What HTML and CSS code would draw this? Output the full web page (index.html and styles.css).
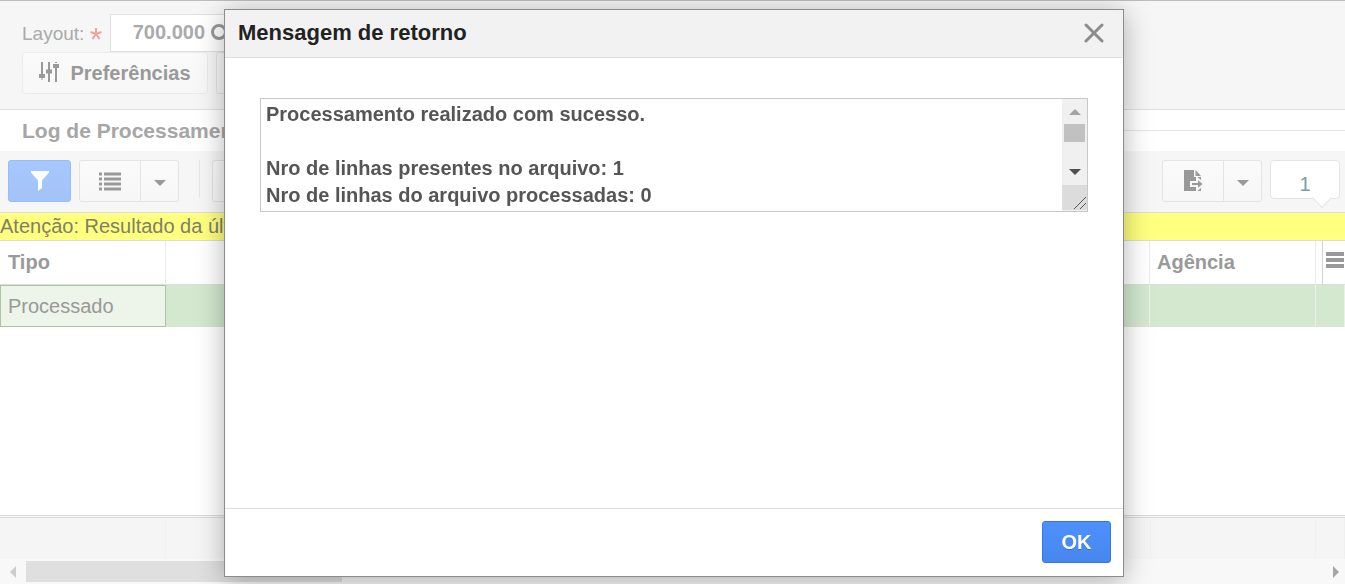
FILE: index.html
```html
<!DOCTYPE html>
<html lang="pt-BR">
<head>
    <meta charset="UTF-8">
    <meta name="viewport" content="width=device-width, initial-scale=1.0">
    <title>Log de Processamento</title>
    <link rel="stylesheet" href="styles.css">
</head>
<body>
    <div class="pagina">
        <header class="painel">
            <div class="campo">
                <label for="layout">Layout:
                    <svg class="obrigatorio" viewBox="0 0 12 12"><path d="M6 0v6M0.500 4l5.500 2 5.500-2M2.500 11l3.500-5 3.500 5"/></svg>
                </label>
                <div class="campo-busca">
                    <input type="text" id="layout" value="700.000">
                    <svg class="lupa" viewBox="0 0 20 20"><circle cx="8" cy="9" r="6.5"/><path d="M13 14l5 5"/></svg>
                </div>
            </div>
            <div class="acoes">
                <button class="btn btn-pref">
                    <svg class="icone-pref" viewBox="0 0 20 22">
                        <path d="M3 1v18M10 1v20M17 1v20" stroke-width="2"/>
                        <path d="M0 15h6M7 10.500h6M14 5h6" stroke-width="4"/>
                        <path class="vao" d="M0 18h6M14 2.500h6" stroke-width="1"/>
                    </svg>
                    Preferências
                </button>
                <button class="btn btn-extra" aria-label="Mais ações"></button>
            </div>
        </header>

        <div class="titulo">
            <h1>Log de Processamento</h1>
            <span class="linha"></span>
        </div>

        <div class="toolbar">
            <button class="btn btn-filtro" aria-label="Filtrar">
                <svg class="icone-filtro" viewBox="0 0 20 22"><path d="M1 1h18v1.500l-7 8v7.500l-4 3v-10.500l-7-8z"/></svg>
            </button>
            <div class="grupo">
                <button class="btn" aria-label="Lista">
                    <svg class="icone-lista" viewBox="0 0 22 20"><path d="M0 3h3M5 3h17M0 8h3M5 8h17M0 13h3M5 13h17M0 18h3M5 18h17"/></svg>
                </button>
                <button class="btn btn-seta" aria-label="Opções da lista"><span class="seta"></span></button>
            </div>
            <span class="separador"></span>
            <button class="btn btn-extra" aria-label="Outras opções"></button>
            <div class="grupo direita">
                <button class="btn" aria-label="Exportar">
                    <svg class="icone-exportar" viewBox="0 0 20 22">
                        <path class="folha" d="M0 0h10v7h7v14h-17z"/>
                        <path class="folha" d="M11.500 0l5.500 6h-5.500z"/>
                        <path class="flecha" d="M7 12h6v-4l7 6-7 6v-4h-6z"/>
                    </svg>
                </button>
                <button class="btn btn-seta" aria-label="Opções de exportação"><span class="seta"></span></button>
            </div>
            <div class="contador">1</div>
        </div>

        <div class="aviso">Atenção: Resultado da última importação</div>

        <div class="grade">
            <table>
                <colgroup><col class="col"><col><col class="col"><col class="col-menu"></colgroup>
                <thead>
                    <tr>
                        <th>Tipo</th>
                        <th></th>
                        <th>Agência</th>
                        <th class="celula-menu">
                            <button class="btn-menu" aria-label="Colunas"><span></span><span></span><span></span></button>
                        </th>
                    </tr>
                </thead>
                <tbody>
                    <tr>
                        <td class="selecionada">Processado</td>
                        <td></td>
                        <td></td>
                        <td></td>
                    </tr>
                </tbody>
            </table>
        </div>

        <div class="rodape"><span></span><span></span><span></span><span></span></div>
        <div class="rolagem-h">
            <span class="rolar-esq"></span>
            <span class="barra-h"></span>
            <span class="rolar-dir"></span>
        </div>
    </div>

    <div class="fundo">
        <div class="dialogo" role="dialog" aria-labelledby="dialogo-titulo">
            <div class="dialogo-topo">
                <h2 id="dialogo-titulo">Mensagem de retorno</h2>
                <button class="fechar" aria-label="Fechar">
                    <svg viewBox="0 0 20 20"><path d="M2 2l16 16M18 2l-16 16"/></svg>
                </button>
            </div>
            <div class="dialogo-corpo">
                <div class="caixa">
                    <textarea aria-label="Mensagem" readonly>Processamento realizado com sucesso.

Nro de linhas presentes no arquivo: 1
Nro de linhas do arquivo processadas: 0</textarea>
                    <div class="rolagem-v">
                        <span class="rolar-cima"></span>
                        <span class="barra-v"></span>
                        <span class="rolar-baixo"></span>
                        <svg class="canto" viewBox="0 0 25 25"><path d="M12 24l12-12M18 24l6-6"/></svg>
                    </div>
                </div>
            </div>
            <div class="dialogo-rodape">
                <button class="btn-ok">OK</button>
            </div>
        </div>
    </div>
</body>
</html>
```
FILE: styles.css
```css
* {
    box-sizing: border-box;
}

body {
    margin: 0;
    font-family: Arial, "Liberation Sans", sans-serif;
    font-size: 20px;
    color: #999;
    background-color: #fff;
    overflow: hidden;
}

h1, h2 {
    margin: 0;
    font-weight: bold;
}

button, input, textarea {
    font-family: inherit;
    font-size: inherit;
}

svg {
    display: block;
    fill: none;
    stroke: #999;
}

.pagina {
    display: flex;
    flex-direction: column;
    height: 100vh;
}

/* Painel superior */
.painel {
    height: 110px;
    padding: 13px 22px 0;
    background-color: #f6f6f6;
    border-top: 1px solid #bdbdbd;
    border-bottom: 1px solid #e0e0e0;
}

.campo {
    display: flex;
    align-items: center;
}

.campo label {
    display: flex;
    align-items: center;
    gap: 6px;
    width: 88px;
    padding-top: 2px;
    color: #aaa;
    font-size: 19px;
    white-space: nowrap;
}

.obrigatorio {
    width: 12px;
    height: 12px;
    stroke: #f0a09a;
    stroke-width: 2;
}

.campo-busca {
    display: flex;
    align-items: center;
    width: 140px;
    height: 38px;
    background-color: #fff;
    border: 1px solid #e0e0e0;
}

.campo-busca input {
    width: 100px;
    height: 34px;
    padding: 0 6px 2px 0;
    border: none;
    background: none;
    color: #aaa;
    font-weight: bold;
    text-align: right;
}

.lupa {
    width: 20px;
    height: 20px;
    stroke-width: 3;
}

.acoes {
    display: flex;
    gap: 8px;
}

.btn {
    display: flex;
    align-items: center;
    justify-content: center;
    height: 42px;
    padding: 0;
    background: linear-gradient(#fafafa, #f7f7f7);
    border: 1px solid #e4e4e4;
    border-radius: 3px;
    color: #999;
    font-weight: bold;
}

.btn-pref {
    gap: 11px;
    width: 186px;
    border-color: #ececec;
}

.icone-pref {
    width: 20px;
    height: 22px;
    margin-bottom: 3px;
}

.vao {
    stroke: #f8f8f8;
}

.btn-extra {
    width: 64px;
}

/* Título */
.titulo {
    display: flex;
    align-items: center;
    height: 41px;
    padding-left: 22px;
}

.titulo h1 {
    font-size: 21px;
    color: #a6a6a6;
}

.linha {
    flex: 1;
    height: 1px;
    background-color: #e6e6e6;
}

/* Barra de ferramentas */
.toolbar {
    display: flex;
    gap: 8px;
    height: 61px;
    padding: 9px 5px 0 8px;
    background-color: #f6f6f6;
}

.btn-filtro {
    width: 63px;
    background: linear-gradient(#a6c8ff, #a3c2f7);
    border-color: #98bcf5;
}

.icone-filtro {
    width: 20px;
    height: 22px;
    fill: #fff;
    stroke: none;
}

.grupo {
    display: flex;
}

.grupo .btn {
    width: 62px;
    border-radius: 3px 0 0 3px;
}

.grupo .btn-seta {
    width: 39px;
    margin-left: -1px;
    border-radius: 0 3px 3px 0;
}

.icone-lista {
    width: 22px;
    height: 20px;
    stroke-width: 3;
}

.seta {
    margin-top: 4px;
    border: 6px solid transparent;
    border-top-color: #999;
    border-bottom: none;
}

.separador {
    width: 1px;
    height: 38px;
    margin: 0 4px 0 12px;
    background-color: #e6e6e6;
}

.direita {
    margin-left: auto;
}

.icone-exportar {
    width: 20px;
    height: 22px;
    margin-left: 2px;
}

.folha {
    fill: #999;
    stroke: none;
}

.flecha {
    fill: #999;
    stroke: #f8f8f8;
    stroke-width: 2;
}

.contador {
    position: relative;
    width: 70px;
    height: 39px;
    background-color: #fff;
    border: 1px solid #e4e4e4;
    border-radius: 4px;
    line-height: 46px;
    text-align: center;
    color: #7d9ba8;
}

.contador::after {
    content: "";
    position: absolute;
    right: 10px;
    bottom: -7px;
    width: 13px;
    height: 13px;
    background-color: #fff;
    border: solid #e4e4e4;
    border-width: 0 1px 1px 0;
    transform: rotate(45deg);
}

.aviso {
    height: 29px;
    background-color: #ffff80;
    border-top: 1px solid #ddd;
    border-bottom: 1px solid #ddd;
    line-height: 27px;
    color: #808066;
}

/* Tabela */
.grade {
    flex: 1;
    min-height: 0;
}

.grade table {
    width: 100%;
    table-layout: fixed;
    border-collapse: separate;
    border-spacing: 0;
}

.col {
    width: 166px;
}

.col-menu {
    width: 29px;
}

.grade th {
    height: 44px;
    padding: 0 7px;
    border-right: 1px solid #ebebeb;
    border-bottom: 1px solid #ddd;
    text-align: left;
}

.grade td {
    height: 42px;
    padding: 0 7px;
    background-color: #d3e8cf;
    border-right: 1px solid #ebf0ea;
}

.grade th:first-child {
    padding-left: 8px;
}

.grade td.selecionada {
    background-color: #edf5ea;
    border: 1px solid #a9c79f;
}

.grade th.celula-menu {
    padding: 0 0 0 6px;
    border-right: none;
}

.btn-menu {
    display: flex;
    flex-direction: column;
    gap: 2px;
    width: 23px;
    height: 43px;
    padding: 11px 0 0 3px;
    background: none;
    border: none;
    border-left: 1px solid #d4d4d4;
}

.btn-menu span {
    width: 18px;
    height: 4px;
    background-color: #999;
}

.rodape {
    display: grid;
    grid-template-columns: 166px 1fr 165px 29px;
    height: 44px;
    background-color: #f5f5f5;
    border-top: 3px double #dcdcdc;
}

.rodape span {
    border-right: 1px solid #f0f0f0;
}

.rolagem-h {
    display: flex;
    align-items: center;
    height: 25px;
    padding: 0 6px 0 10px;
    background-color: #f8f8f8;
}

.rolar-esq {
    border: 6px solid transparent;
    border-right-color: #ccc;
    border-left: none;
}

.barra-h {
    width: 316px;
    height: 21px;
    margin-left: 10px;
    background-color: #dfdfdf;
}

.rolar-dir {
    margin-left: auto;
    border: 6px solid transparent;
    border-left-color: #a6a6a6;
    border-right: none;
}

/* Diálogo */
.fundo {
    position: fixed;
    inset: 0;
    display: flex;
    align-items: center;
    justify-content: center;
    padding: 2px 0 0 3px;
}

.dialogo {
    width: 900px;
    background-color: #fff;
    border: 1px solid #8c8c8c;
    box-shadow: 0 4px 26px rgba(0, 0, 0, 0.3);
}

.dialogo-topo {
    display: flex;
    align-items: center;
    justify-content: space-between;
    height: 48px;
    padding: 0 19px 2px 13px;
    background-color: #f2f2f2;
    border-bottom: 1px solid #e0e0e0;
}

.dialogo-topo h2 {
    font-size: 22px;
    color: #222;
}

.fechar {
    padding: 0;
    background: none;
    border: none;
}

.fechar svg {
    width: 20px;
    height: 20px;
    stroke: #8c8c8c;
    stroke-width: 3;
    stroke-linecap: round;
}

.dialogo-corpo {
    min-height: 450px;
    padding: 40px 35px;
}

.caixa {
    display: flex;
    height: 114px;
    border: 1px solid #c8c8c8;
}

.caixa textarea {
    flex: 1;
    padding: 2px 5px;
    border: none;
    outline: none;
    resize: none;
    overflow: hidden;
    background: none;
    color: #555;
    font-weight: bold;
    line-height: 27px;
}

.rolagem-v {
    display: flex;
    flex-direction: column;
    align-items: center;
    width: 25px;
    padding: 10px 0 1px;
    background-color: #f0f0f0;
}

.rolar-cima {
    border: 6px solid transparent;
    border-top: none;
    border-bottom-color: #a3a3a3;
}

.barra-v {
    width: 21px;
    height: 18px;
    margin-top: 9px;
    background-color: #c1c1c1;
}

.rolar-baixo {
    margin-top: auto;
    border: 6px solid transparent;
    border-top-color: #505050;
    border-bottom: none;
}

.canto {
    width: 25px;
    height: 25px;
    margin-top: 10px;
    background-color: #dcdcdc;
    stroke: #555;
}

.dialogo-rodape {
    display: flex;
    justify-content: flex-end;
    padding: 12px 12px 13px;
    border-top: 1px solid #e0e0e0;
}

.btn-ok {
    width: 69px;
    height: 42px;
    padding: 0;
    background: linear-gradient(#4d90fe, #4787ed);
    border: 1px solid #3079ed;
    border-radius: 3px;
    color: #fff;
    font-weight: bold;
    text-shadow: 0 1px rgba(0, 0, 0, 0.2);
}
```
